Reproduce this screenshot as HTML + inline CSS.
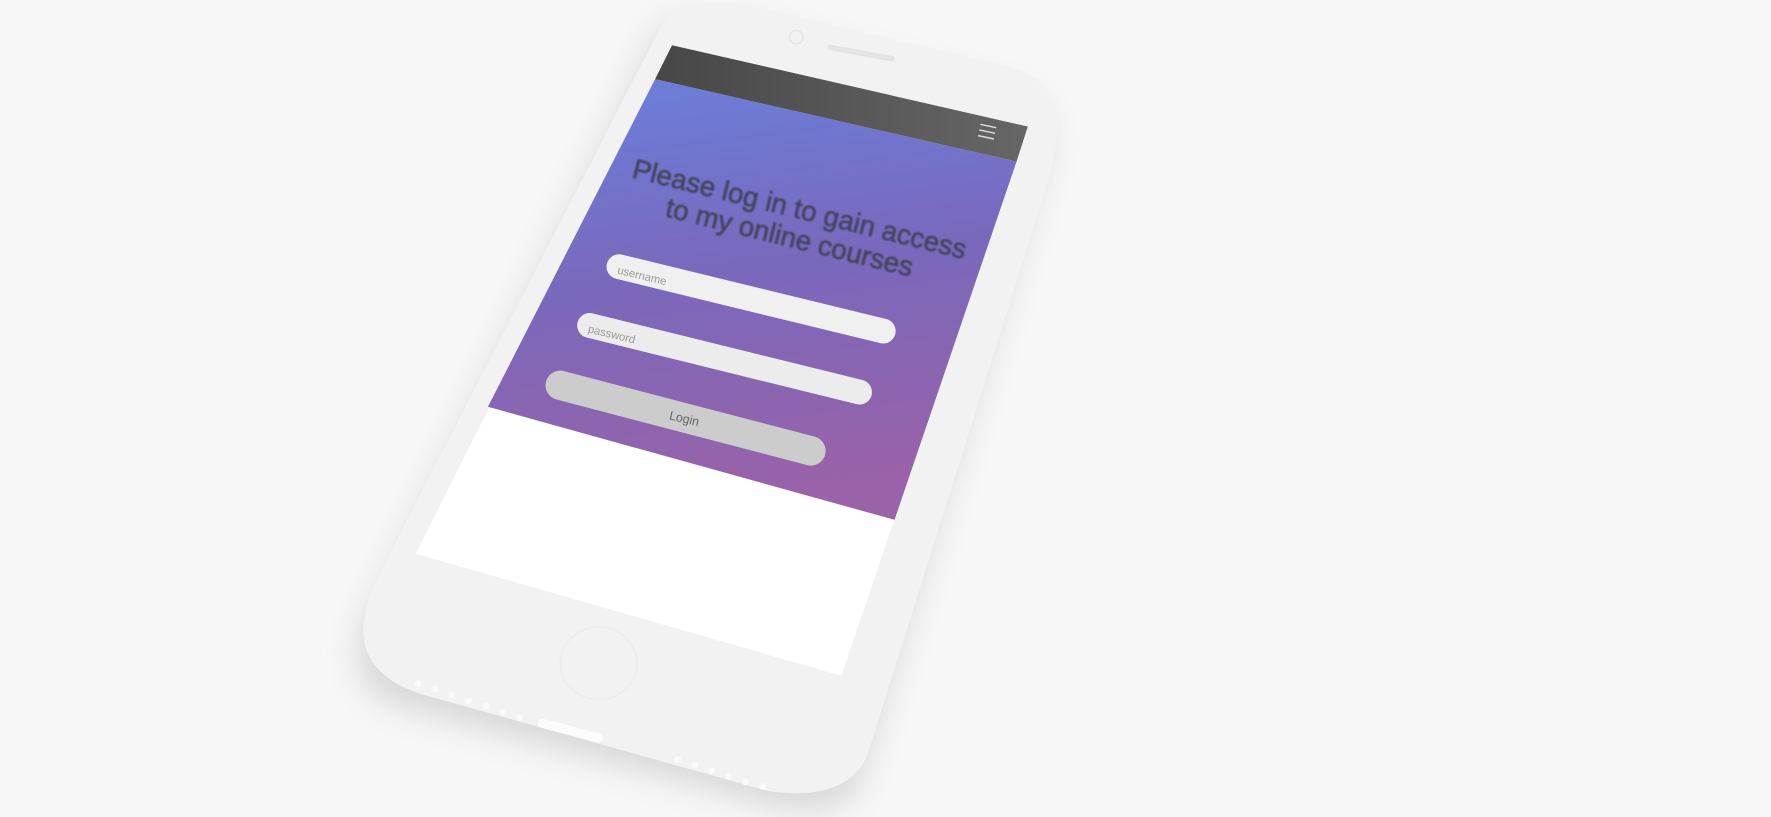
<!DOCTYPE html>
<html><head><meta charset="utf-8"><style>
html,body{margin:0;padding:0;background:#f7f7f7;overflow:hidden}
svg{display:block}
</style></head><body>
<svg width="1771" height="817" viewBox="0 0 1568 723" preserveAspectRatio="none" xmlns="http://www.w3.org/2000/svg">
<defs>
<filter id="sh" x="-30%" y="-30%" width="160%" height="160%"><feGaussianBlur stdDeviation="14"/></filter>
<filter id="bl"><feGaussianBlur stdDeviation="0.6"/></filter>
<linearGradient id="g" x1="0" y1="0" x2="0.15" y2="1">
<stop offset="0" stop-color="#6a80dc"/>
<stop offset="0.5" stop-color="#7a68bc"/>
<stop offset="1" stop-color="#9a62a8"/>
</linearGradient>
<linearGradient id="bar" x1="0" y1="0" x2="1" y2="0">
<stop offset="0" stop-color="#474747"/>
<stop offset="1" stop-color="#666"/>
</linearGradient>
</defs>
<rect width="1568" height="723" fill="#f7f7f7"/>
<path d="M590 20 Q610 0 660 10 L900 70 Q945 85 935 130 L770 680 Q755 715 700 705 L360 615 Q310 595 330 540 Z" fill="#d8d8d8" filter="url(#sh)" transform="translate(-8,10)"/>
<path d="M588 18 Q608 -4 660 4 L890 58 Q942 72 936 120 Q934 140 928 160 L768 668 Q750 710 680 700 L372 614 Q318 596 322 552 Q324 530 335 510 Z" fill="#f2f2f2"/>
<circle cx="705" cy="33" r="6" fill="none" stroke="#e6e6e6" stroke-width="1.5"/>
<line x1="735" y1="42" x2="790" y2="52" stroke="#e4e4e4" stroke-width="5" stroke-linecap="round"/>
<ellipse cx="530" cy="587" rx="34" ry="32" fill="none" stroke="#ededed" stroke-width="1.5"/>
<polygon points="595,40 910,112 745,598 368,490" fill="#ffffff"/>
<polygon points="580,70 900,143 792,460 432,360" fill="url(#g)"/>
<polygon points="595,40 910,112 900,143 580,70" fill="url(#bar)"/>
<g stroke="#ddd" stroke-width="1.3"><line x1="868" y1="110" x2="882" y2="113"/><line x1="867" y1="115" x2="881" y2="118"/><line x1="866" y1="120" x2="880" y2="123"/></g>
<g font-family="Liberation Sans, sans-serif" font-size="24.5" fill="#454560" stroke="#454560" stroke-width="0.6" text-anchor="middle" filter="url(#bl)">
<text transform="translate(706,193) rotate(13.8)">Please log in to gain access</text>
<text transform="translate(697,218) rotate(13.8)">to my online courses</text>
</g>
<line x1="548" y1="236" x2="782" y2="293" stroke="#f0f0f0" stroke-width="22" stroke-linecap="round"/>
<line x1="522" y1="288" x2="761" y2="347" stroke="#ececec" stroke-width="22" stroke-linecap="round"/>
<line x1="496" y1="341" x2="718" y2="399" stroke="#cccccc" stroke-width="26" stroke-linecap="round"/>
<g font-family="Liberation Sans, sans-serif" font-size="10" fill="#999">
<text transform="translate(546,242) rotate(13.5)">username</text>
<text transform="translate(520,294) rotate(13.5)">password</text>
</g>
<text transform="translate(605,374) rotate(13.5)" font-family="Liberation Sans, sans-serif" font-size="11" fill="#666" text-anchor="middle">Login</text>
<g fill="#fafafa">
<circle cx="370" cy="605" r="3"/><circle cx="385" cy="610" r="3"/><circle cx="400" cy="615" r="3"/><circle cx="415" cy="620" r="3"/><circle cx="430" cy="625" r="3"/><circle cx="445" cy="630" r="3"/><circle cx="460" cy="635" r="3"/>
<circle cx="600" cy="672" r="3"/><circle cx="615" cy="677" r="3"/><circle cx="630" cy="682" r="3"/><circle cx="645" cy="687" r="3"/><circle cx="660" cy="692" r="3"/><circle cx="675" cy="696" r="3"/>
</g>
<line x1="480" y1="640" x2="530" y2="653" stroke="#fcfcfc" stroke-width="8" stroke-linecap="round"/>
</svg>
</body></html>
